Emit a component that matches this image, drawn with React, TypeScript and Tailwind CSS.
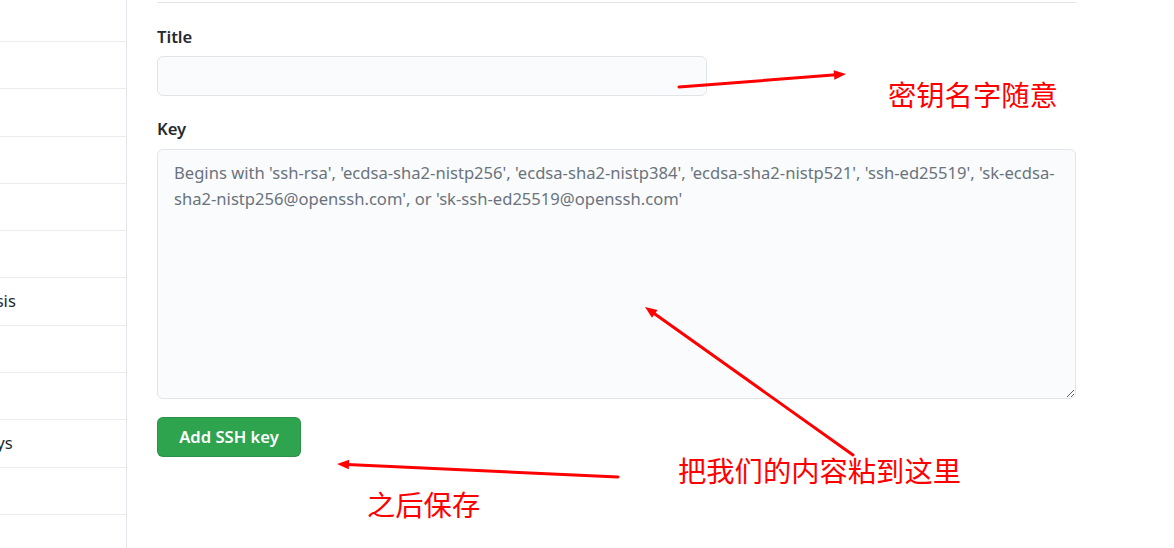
import React from "react";

const sidebarRows = [
  "Profile",
  "Account",
  "Appearance",
  "Billing & plans",
  "Emails",
  "Security log",
  "Security & analysis",
  "Notifications",
  "Applications",
  "SSH and GPG keys",
  "Repositories",
  "Organizations",
];

const arrows = [
  { x1: 679, y1: 87, x2: 846, y2: 74 },
  { x1: 853, y1: 455, x2: 645, y2: 307 },
  { x1: 618, y1: 477, x2: 337, y2: 464 },
];

function Arrow({ x1, y1, x2, y2 }: { x1: number; y1: number; x2: number; y2: number }) {
  const dx = x2 - x1;
  const dy = y2 - y1;
  const len = Math.hypot(dx, dy);
  const ux = dx / len;
  const uy = dy / len;
  const headLen = 12;
  const half = 4.8;
  const bx = x2 - ux * headLen;
  const by = y2 - uy * headLen;
  const nx = -uy;
  const ny = ux;
  const pts = `${x2},${y2} ${bx + nx * half},${by + ny * half} ${bx - nx * half},${by - ny * half}`;
  return (
    <g>
      <line x1={x1} y1={y1} x2={bx + ux * 2} y2={by + uy * 2} stroke="#ff0000" strokeWidth={3} strokeLinecap="round" />
      <polygon points={pts} fill="#ff0000" />
    </g>
  );
}

const placeholder =
  "Begins with 'ssh-rsa', 'ecdsa-sha2-nistp256', 'ecdsa-sha2-nistp384', 'ecdsa-sha2-nistp521', 'ssh-ed25519', 'sk-ecdsa-\nsha2-nistp256@openssh.com', or 'sk-ssh-ed25519@openssh.com'";

export default function App() {
  return (
    <div className="relative flex h-[548px] w-[1174px] overflow-hidden bg-white font-['Noto_Sans','Noto_Sans_CJK_SC',sans-serif] text-[16.6px] text-[#24292e]">
      {/* Sidebar */}
      <aside className="h-full w-[127px] shrink-0 overflow-hidden border-r border-[#e1e4e8]">
        <div className="ml-[-129px] w-[256px]">
          {sidebarRows.map((label, i) => (
            <div
              key={label}
              className={
                i === 0
                  ? "flex h-[42px] items-center whitespace-nowrap border-b border-[#eaecef] pt-[0px]"
                  : i === sidebarRows.length - 1
                  ? "flex h-[47.3px] items-center whitespace-nowrap"
                  : "flex h-[47.3px] items-center whitespace-nowrap border-b border-[#eaecef]"
              }
            >
              {label}
            </div>
          ))}
        </div>
      </aside>

      {/* Main */}
      <main className="flex-1 pl-[30px]">
        <div className="w-[919px]">
          <div className="h-[3px] border-b border-[#e1e4e8]" />
          <div className="mt-[22px]">
            <label className="block font-semibold leading-[24px]">Title</label>
            <input
              type="text"
              className="mt-[7px] block h-[40px] w-[550px] rounded-md border border-[#e1e4e8] bg-[#fafbfc] px-3 outline-none"
            />
          </div>
          <div className="mt-[21px]">
            <label className="block font-semibold leading-[24px]">Key</label>
            <textarea
              placeholder={placeholder}
              className="mt-[8px] block h-[250px] w-[919px] rounded-md border border-[#e1e4e8] bg-[#fafbfc] pb-2 pl-4 pr-3 pt-[10px] leading-[26px] outline-none placeholder:text-[#6a737d]"
            />
          </div>
          <button
            type="button"
            className="mt-[18px] flex h-[40px] w-[144px] items-center justify-center rounded-md border border-[rgba(27,31,35,0.15)] bg-[#2ea44f] font-semibold text-white"
          >
            Add SSH key
          </button>
        </div>
      </main>

      {/* Annotations overlay */}
      <svg className="pointer-events-none absolute left-0 top-0" width={1174} height={548} viewBox="0 0 1174 548">
        {arrows.map((a, i) => (
          <Arrow key={i} {...a} />
        ))}
      </svg>
      <span className="pointer-events-none absolute left-[888px] top-[80px] whitespace-nowrap font-['Noto_Sans_CJK_SC',sans-serif] text-[28.3px] leading-none text-[#ff0000]">
        密钥名字随意
      </span>
      <span className="pointer-events-none absolute left-[678px] top-[456px] whitespace-nowrap font-['Noto_Sans_CJK_SC',sans-serif] text-[28.3px] leading-none text-[#ff0000]">
        把我们的内容粘到这里
      </span>
      <span className="pointer-events-none absolute left-[367px] top-[490px] whitespace-nowrap font-['Noto_Sans_CJK_SC',sans-serif] text-[28.3px] leading-none text-[#ff0000]">
        之后保存
      </span>
    </div>
  );
}
